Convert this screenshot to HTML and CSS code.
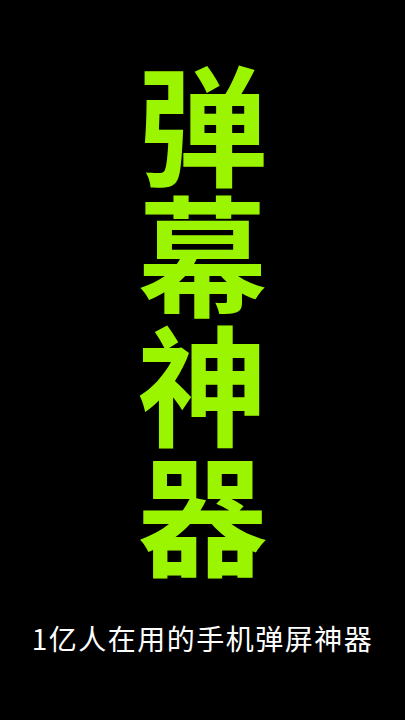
FILE: index.html
```html
<!DOCTYPE html>
<html lang="zh-CN">
<head>
    <meta charset="UTF-8">
    <meta name="viewport" content="width=device-width, initial-scale=1.0">
    <title>弹幕神器</title>
    <link rel="stylesheet" href="styles.css">
</head>
<body>

<div class="screen">
    <h1 class="title">
        <span>弹</span>
        <span>幕</span>
        <span>神</span>
        <span>器</span>
    </h1>
    <p class="slogan">1亿人在用的手机弹屏神器</p>
</div>

</body>
</html>
```

FILE: styles.css
```css
/* Colors */
:root {
    --black: #000000;
    --lime: #9cf500;
    --white: #ffffff;
}

body {
    margin: 0;
    padding: 0;
    background-color: var(--black);
    font-family: 'Noto Sans CJK SC', 'Noto Sans', sans-serif;
}

.screen {
    width: 405px;
    height: 720px;
    display: flex;
    flex-direction: column;
    align-items: center;
}

.title {
    margin: 54px 0 0 0;
    display: flex;
    flex-direction: column;
    align-items: center;
    color: var(--lime);
    font-size: 130px;
    font-weight: 700;
    line-height: 130px;
}

.title span {
    display: block;
}

.slogan {
    margin: 44px 0 0 0;
    color: var(--white);
    font-size: 28px;
    font-weight: 400;
    letter-spacing: 1.5px;
    line-height: 40px;
}
```
